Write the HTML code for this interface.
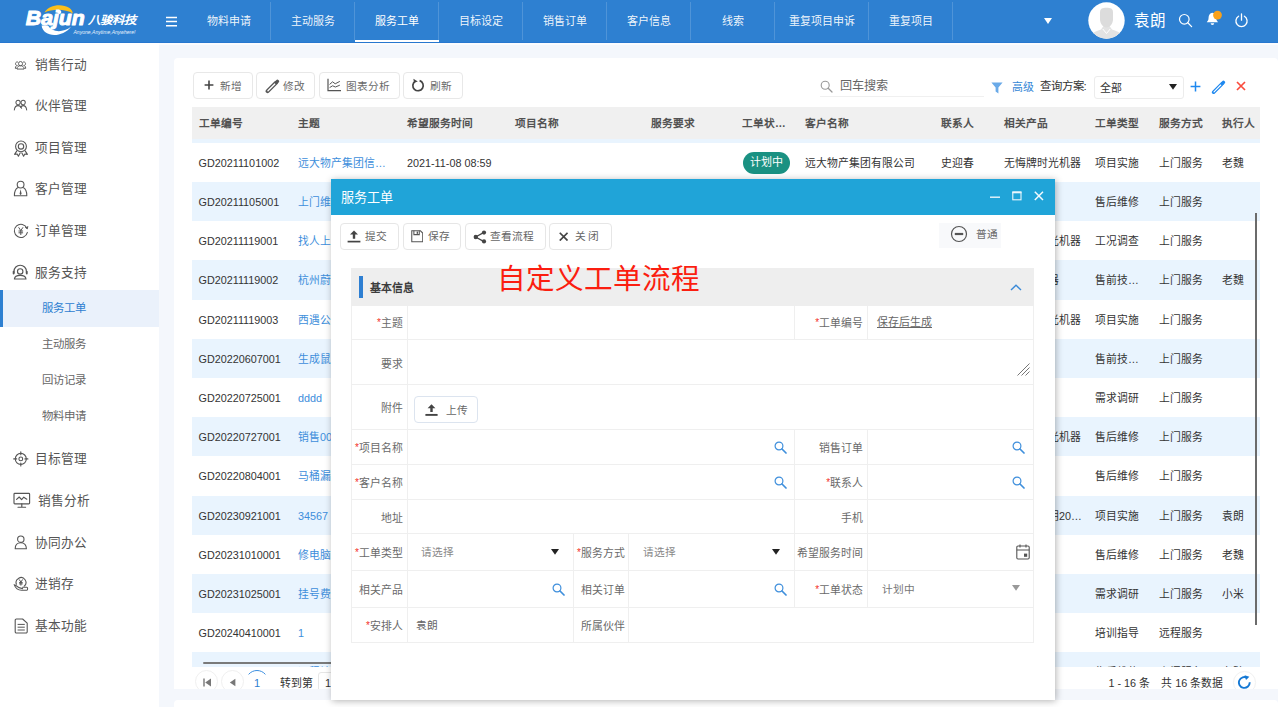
<!DOCTYPE html>
<html lang="zh-CN">
<head>
<meta charset="utf-8">
<title>服务工单</title>
<style>
*{box-sizing:border-box;margin:0;padding:0}
html,body{width:1278px;height:707px;overflow:hidden}
body{font-family:"Liberation Sans",sans-serif;font-size:10.7px;color:#333;background:#f4f7fc;position:relative}
.abs{position:absolute}
/* top bar */
#top{position:absolute;left:0;top:0;width:1278px;height:43px;background:#2e80d1;border-bottom:1px solid #2777cf}
#strip{position:absolute;left:0;top:43px;width:1278px;height:1.7px;background:#fbfcfe}
.nav{position:absolute;top:0;height:43px;line-height:42px;text-align:center;color:rgba(255,255,255,.93);font-size:11px}
.nav.act{color:#fff}
.nav.act:after{content:"";position:absolute;left:0;right:0;top:39.5px;height:2px;background:#fff}
.sep{position:absolute;top:2px;width:1px;height:38px;background:rgba(255,255,255,.16)}
/* sidebar */
#side{position:absolute;left:0;top:43px;width:159px;height:664px;background:#fff}
.mi{position:absolute;left:35px;font-size:12.7px;color:#555;line-height:16px;white-space:nowrap}
.si{position:absolute;left:42.2px;font-size:11.4px;margin-top:.6px;color:#666;line-height:16px;white-space:nowrap}
.ico{position:absolute}
#actbg{position:absolute;left:0;top:247px;width:159px;height:36.5px;background:#eaf1fb;border-left:3px solid #2e80d1}
/* card */
#card{position:absolute;left:174px;top:58px;width:1104px;height:630.5px;background:#fff;border-radius:4px 4px 0 0;overflow:hidden}
#card2{position:absolute;left:174px;top:700.2px;width:1104px;height:10px;background:#fff;border-radius:4px 4px 0 0}
.btn{position:absolute;top:72.3px;height:26.5px;border:1px solid #e8e8e8;border-radius:4px;background:#fff;color:#6a6a6a;font-size:10.7px;line-height:24px;white-space:nowrap}
.btn span{position:absolute;top:.3px;margin-left:.5px}
/* table */
#thead{position:absolute;left:192px;top:107px;width:1068px;height:31.5px;background:#f0f0f0}
#thead2{position:absolute;left:192px;top:138.5px;width:1068px;height:4.3px;background:#e9f4fe}
.th{position:absolute;top:0;line-height:33.8px;font-weight:bold;color:#525252;font-size:10.7px;white-space:nowrap}
#tbody{position:absolute;left:192px;top:142.8px;width:1068px;height:524px;overflow:hidden}
.tr{position:absolute;left:0;width:1068px;height:39.2px;line-height:40px;background:#fff}
.tr.alt{background:#e9f4fe}
.td{position:absolute;top:0;white-space:nowrap;color:#333;font-size:10.8px}
.td.lk{color:#3d8edb}
.badge{position:absolute;top:9.5px;height:21.5px;width:47px;border-radius:11px;background:#1a9182;color:#fff;line-height:21.5px;text-align:center;font-size:11px}
/* modal */
#modal{position:absolute;left:331px;top:179px;width:724px;height:521px;background:#fff;box-shadow:1px 1px 7px 0 rgba(0,0,0,.3)}
#mtitle{position:absolute;left:0;top:0;width:724px;height:36px;background:#20a4d8;color:#fff;font-size:13.1px;line-height:37.4px;padding-left:10.3px}
.mbtn{position:absolute;top:43.8px;height:27px;border:1px solid #e6e6e6;border-radius:4px;background:#fff;color:#666;font-size:10.7px;line-height:24px;white-space:nowrap}
.mbtn span{position:absolute;top:.5px}
#sec{position:absolute;left:20px;top:89.3px;width:683px;height:37.6px;background:#eeeeee}
#secbar{position:absolute;left:28px;top:97.3px;width:3.9px;height:22px;background:#2e7fd2}
#sect{position:absolute;left:39px;top:101.2px;font-weight:bold;font-size:10.9px;color:#3c3c3c;line-height:16px}
#red{position:absolute;left:166px;top:79.5px;font-size:28.6px;line-height:40px;color:#fb1e10;white-space:nowrap;letter-spacing:0}
.hl{position:absolute;left:20px;width:683px;height:1px;background:#efefef}
.vl{position:absolute;width:1px;background:#efefef}
.lab{position:absolute;text-align:right;color:#6a6a6a;font-size:10.85px;white-space:nowrap;line-height:16px}
.lab i{color:#f3301f;font-style:normal;font-size:10px;position:relative;top:-1px;margin-right:0}
.val{position:absolute;color:#777;font-size:10.7px;white-space:nowrap;line-height:16px}
</style>
</head>
<body>
<div id="top">
  <!-- logo -->
  <svg class="abs" style="left:20px;top:0" width="130" height="43" viewBox="0 0 130 43">
    <path d="M24.5 12.4 C29 5.300 41 3 49.5 8 C51.5 9.400 52.600 11.400 52.800 13.600 C46 9 33 8.600 24.500 12.400 Z" fill="#fbbf1a"/>
    <path d="M21.600 25.600 C23 37.500 42 38.500 51 26.800 C43 33 32 32.500 28 25.600 Z" fill="#fff"/>
    <circle cx="39.300" cy="12" r="2" fill="#fff"/>
    <text x="5.800" y="24.900" font-family="Liberation Sans, sans-serif" font-weight="bold" font-style="italic" font-size="20.500" fill="#fff" stroke="#fff" stroke-width="1" stroke-linejoin="round" textLength="59" lengthAdjust="spacingAndGlyphs">Bajun</text>
    <text x="67.800" y="24.400" font-family="Liberation Sans, sans-serif" font-weight="bold" font-style="italic" font-size="11.300" fill="#fff" textLength="48.500" lengthAdjust="spacingAndGlyphs">八骏科技</text>
    <text x="53.500" y="33.600" font-family="Liberation Sans, sans-serif" font-style="italic" font-size="5.200" fill="#e6f0fb" textLength="62" lengthAdjust="spacingAndGlyphs">Anyone,Anytime,Anywhere!</text>
  </svg>
  <!-- hamburger -->
  <svg class="abs" style="left:166px;top:16px" width="12" height="12" viewBox="0 0 12 12"><path d="M0 1.4h11M0 5.6h11M0 9.8h11" stroke="#fff" stroke-width="1.5" fill="none"/></svg>
  <div class="nav" style="left:186.5px;width:84px">物料申请</div>
  <div class="nav" style="left:270.5px;width:84px">主动服务</div>
  <div class="nav act" style="left:354.5px;width:84px">服务工单</div>
  <div class="nav" style="left:438.5px;width:84px">目标设定</div>
  <div class="nav" style="left:522.5px;width:84px">销售订单</div>
  <div class="nav" style="left:606.5px;width:84px">客户信息</div>
  <div class="nav" style="left:690.5px;width:84px">线索</div>
  <div class="nav" style="left:774.5px;width:94px">重复项目申诉</div>
  <div class="nav" style="left:868.5px;width:84px">重复项目</div>
  <div class="sep" style="left:270px"></div><div class="sep" style="left:354px"></div><div class="sep" style="left:438px"></div>
  <div class="sep" style="left:522px"></div><div class="sep" style="left:606px"></div><div class="sep" style="left:690px"></div>
  <div class="sep" style="left:774px"></div><div class="sep" style="left:868px"></div><div class="sep" style="left:952px"></div>
  <!-- caret -->
  <svg class="abs" style="left:1044px;top:18px" width="8" height="6" viewBox="0 0 8 6"><path d="M0 0h8L4 6z" fill="#fff"/></svg>
  <!-- avatar -->
  <svg class="abs" style="left:1088px;top:2px" width="37" height="37" viewBox="0 0 37 37">
    <defs><clipPath id="avc"><circle cx="18.500" cy="18.500" r="18.200"/></clipPath></defs>
    <circle cx="18.500" cy="18.500" r="18.200" fill="#fff"/>
    <g clip-path="url(#avc)">
      <path d="M2 38 C2 31 7 29.500 13 27.500 L15.500 24 L21.500 24 L24 27.500 C30 29.500 35 31 35 38 Z" fill="#e3e3e3"/>
      <path d="M12 10.500 C12 6.500 14.500 5.800 18.500 5.800 C22.500 5.800 25 6.500 25 10.500 L25 17 C25 21.500 22 25.500 18.500 25.500 C15 25.500 12 21.500 12 17 Z" fill="#dcdcdc"/>
      <path d="M14.800 27 L18.500 31.500 L22.200 27" stroke="#fff" stroke-width="1" fill="none"/>
    </g>
  </svg>
  <div class="abs" style="left:1134px;top:11px;font-size:15.6px;line-height:20px;color:#fff;white-space:nowrap">袁朗</div>
  <!-- search -->
  <svg class="abs" style="left:1178px;top:13px" width="15" height="15" viewBox="0 0 15 15"><circle cx="6.3" cy="6.3" r="4.8" stroke="#fff" stroke-width="1.2" fill="none"/><path d="M9.8 9.8L13.6 13.6" stroke="#fff" stroke-width="1.3" stroke-linecap="round"/></svg>
  <!-- bell -->
  <svg class="abs" style="left:1205px;top:10px" width="20" height="18" viewBox="0 0 20 18">
    <path d="M7.400 2.800 C4.800 3.200 3.600 5.400 3.600 7.600 C3.600 10.200 2.600 11.200 1.800 12.200 L13 12.200 C12.200 11.200 11.200 10.200 11.200 7.600 C11.200 5.400 10 3.200 7.400 2.800 Z" fill="#fff"/>
    <path d="M5.600 13.200 a1.800 1.800 0 0 0 3.600 0z" fill="#fff"/>
    <circle cx="12.500" cy="5.100" r="4.400" fill="#f9a11b"/>
  </svg>
  <!-- power -->
  <svg class="abs" style="left:1234px;top:13px" width="15" height="15" viewBox="0 0 15 15"><path d="M4.6 3.2 A5.6 5.6 0 1 0 10.4 3.2" stroke="#fff" stroke-width="1.3" fill="none" stroke-linecap="round"/><path d="M7.5 1v6.2" stroke="#fff" stroke-width="1.3" stroke-linecap="round"/></svg>
</div>
<div id="strip"></div>
<div id="side"></div>
<div id="actbg" style="top:290px"></div>
<!-- sidebar icons -->
<svg class="ico" style="left:14.200px;top:59px" width="13.400" height="12.600" preserveAspectRatio="none" viewBox="0 0 16 14" fill="none" stroke="#555" stroke-width="1.05">
  <circle cx="7.8" cy="5.2" r="2.4"/><path d="M3.6 11.2c0-2.6 1.8-3.8 4.2-3.8s4.2 1.2 4.2 3.8z"/>
  <path d="M4.9 3.6a2 2 0 1 0-.6 3.6M2.9 7.6C1.9 8.2 1.6 9.2 1.6 10.4h1.8M10.7 3.6a2 2 0 1 1 .6 3.6M12.7 7.6c1 .6 1.3 1.6 1.3 2.8h-1.8"/>
</svg>
<svg class="ico" style="left:13.300px;top:98px" width="15" height="14" preserveAspectRatio="none" viewBox="0 0 16 14" fill="none" stroke="#555" stroke-width="1.05" stroke-linecap="round">
  <circle cx="5.4" cy="4.6" r="2.3"/><circle cx="10.8" cy="4.6" r="2.3"/>
  <path d="M1.4 12c.3-2.6 1.8-4.4 4-4.4s3.2 1.2 3.8 2.6M8 9.4c.6-1 1.6-1.8 2.8-1.8 2.2 0 3.5 1.8 3.8 4.4"/>
</svg>
<svg class="ico" style="left:12.5px;top:139.5px" width="16" height="17" viewBox="0 0 16 17" fill="none" stroke="#555" stroke-width="1.1" stroke-linejoin="round">
  <circle cx="8" cy="6.4" r="5.4"/><circle cx="8" cy="6.4" r="2.7"/>
  <path d="M4 10.6L1.6 14.4l2.6-.4 1.2 2.2 2-3.8M12 10.6l2.4 3.8-2.6-.4-1.2 2.2-2-3.8"/>
</svg>
<svg class="ico" style="left:13px;top:180px" width="16" height="17" viewBox="0 0 16 17" fill="none" stroke="#555" stroke-width="1.1" stroke-linejoin="round">
  <circle cx="7.6" cy="4.6" r="3.4"/>
  <path d="M5 7.6C2.6 8.8 1.4 11.6 1.4 15.8h12.4c0-4.2-1.2-7-3.6-8.2"/>
  <path d="M7.6 9.2l-1 4.6 1 1.4 1-1.4z" fill="#555" stroke="none"/>
</svg>
<svg class="ico" style="left:12.5px;top:222.5px" width="16" height="16" viewBox="0 0 16 16" fill="none" stroke="#555" stroke-width="1.05" stroke-linecap="round">
  <path d="M14 5.2A6.6 6.6 0 1 0 14.4 9.4"/><path d="M12.6 4.4l1.6 1.2.6-2" stroke-linejoin="round"/>
  <path d="M5.8 4.6L7.8 7.6 9.8 4.6M7.8 7.6v4M5.9 8h3.8M5.9 9.8h3.8" stroke-width="1"/>
</svg>
<svg class="ico" style="left:11.7px;top:264px" width="17" height="16" viewBox="0 0 17 16" fill="none" stroke="#555" stroke-width="1.15" stroke-linecap="round">
  <path d="M2 9V7.4a6.2 6.2 0 0 1 12.4 0V9"/><circle cx="8.2" cy="7.4" r="2.7"/>
  <path d="M2.4 15c.3-2.6 2.4-3.6 5.8-3.6s5.5 1 5.8 3.6z" stroke-linejoin="round"/>
  <path d="M1.6 7.6v2M14.8 7.6v2" stroke-width="1.8"/>
</svg>
<svg class="ico" style="left:13px;top:450.5px" width="16" height="16" viewBox="0 0 16 16" fill="none" stroke="#555" stroke-width="1.1" stroke-linecap="round">
  <circle cx="7.8" cy="7.9" r="5.5"/><circle cx="7.8" cy="7.9" r="1.9"/><path d="M7.8 .8v3M7.8 12v3M.7 7.9h3M11.9 7.9h3"/>
</svg>
<svg class="ico" style="left:12.5px;top:491.5px" width="18" height="17" viewBox="0 0 18 17" fill="none" stroke="#555" stroke-width="1.15" stroke-linecap="round" stroke-linejoin="round">
  <rect x="1" y="1.4" width="15.6" height="10.4" rx=".8"/><path d="M8.8 11.8v3M5 15.2h7.6M3.6 7.4l2.6-2.4 2.4 2.6 2.2-2.4 3 2"/>
</svg>
<svg class="ico" style="left:13.5px;top:535px" width="14" height="15" viewBox="0 0 14 15" fill="none" stroke="#555" stroke-width="1.1" stroke-linejoin="round">
  <circle cx="6.8" cy="4.2" r="3.2"/><path d="M1.2 13.8c0-4 2-6 5.6-6s5.6 2 5.6 6z"/>
</svg>
<svg class="ico" style="left:13px;top:575.700px" width="16" height="16" viewBox="0 0 16 16" fill="none" stroke="#555" stroke-width="1.1" stroke-linecap="round" stroke-linejoin="round">
  <path d="M3.4 8.2A4.900 4.900 0 1 1 11.200 10.200"/><path d="M6.400 3.800l1.500 2.400 1.500-2.400M7.900 6.200v3M6.500 6.600h2.800M6.500 7.900h2.800" stroke-width="1"/>
  <path d="M1.200 8.600C2.200 11.400 5 14.200 8.600 14.200h5.200c1.100 0 1.100-2.900 0-2.900H9.600M2.400 9.200C4 10.600 6.400 12.600 9.600 12.600"/>
</svg>
<svg class="ico" style="left:13.5px;top:617.5px" width="15" height="16" viewBox="0 0 15 16" fill="none" stroke="#555" stroke-width="1.1" stroke-linecap="round" stroke-linejoin="round">
  <path d="M1.200 2.200a1.200 1.200 0 0 1 1.200-1.200h6.200l4.600 4.200v8.600a1.200 1.200 0 0 1-1.200 1.200H2.400a1.200 1.200 0 0 1-1.200-1.200z"/>
  <path d="M4 6.400h6.400M4 9.200h6.400M4 12h6.400" stroke-width="1"/>
</svg>
<div class="mi" style="top:57px">销售行动</div>
<div class="mi" style="top:98px">伙伴管理</div>
<div class="mi" style="top:139.500px">项目管理</div>
<div class="mi" style="top:181px">客户管理</div>
<div class="mi" style="top:223px">订单管理</div>
<div class="mi" style="top:264.500px">服务支持</div>
<div class="si" style="top:299px;color:#2e80d1">服务工单</div>
<div class="si" style="top:335px">主动服务</div>
<div class="si" style="top:371.500px">回访记录</div>
<div class="si" style="top:407.500px">物料申请</div>
<div class="mi" style="top:451px">目标管理</div>
<div class="mi" style="top:492.500px;left:37.500px">销售分析</div>
<div class="mi" style="top:534.500px">协同办公</div>
<div class="mi" style="top:576px">进销存</div>
<div class="mi" style="top:617.500px">基本功能</div>
<div id="card"></div>
<div id="card2"></div>
<!-- toolbar buttons -->
<div class="btn" style="left:193px;width:59.500px">
  <svg class="abs" style="left:9.500px;top:7px" width="10" height="10" viewBox="0 0 10 10"><path d="M5 .6v8.800M.6 5h8.800" stroke="#444" stroke-width="1.600"/></svg>
  <span style="left:25px">新增</span></div>
<div class="btn" style="left:256px;width:59px">
  <svg class="abs" style="left:7.500px;top:5.500px" width="15" height="15" viewBox="0 0 15 15"><path d="M2.600 12.200L10.600 4.200" stroke="#555" stroke-width="4" stroke-linecap="round"/><path d="M3 11.800L9.800 5" stroke="#fff" stroke-width="1.400" stroke-linecap="round"/><path d="M11.600 3.200L12.400 2.400" stroke="#555" stroke-width="3.400" stroke-linecap="round"/></svg>
  <span style="left:25px">修改</span></div>
<div class="btn" style="left:318.500px;width:81px">
  <svg class="abs" style="left:7.500px;top:5px" width="15" height="14" viewBox="0 0 15 14" fill="none" stroke="#555" stroke-width="1.200"><path d="M1 .8v11.800h13"/><path d="M2.600 6.400l3-2.600 2.600 2 4.600-2.400M2.600 9.600l3-1.800 2.800 1.200 4.400-1.800" stroke-width="1"/></svg>
  <span style="left:25.500px">图表分析</span></div>
<div class="btn" style="left:403px;width:59.500px">
  <svg class="abs" style="left:7px;top:5px" width="14" height="14" viewBox="0 0 14 14" fill="none"><path d="M4.200 3.200A5.200 5.200 0 1 0 8.600 2.600" stroke="#444" stroke-width="1.700"/><path d="M2.400 .8l.6 4 3.800-1.400z" fill="#444"/></svg>
  <span style="left:25px">刷新</span></div>
<!-- search -->
<svg class="abs" style="left:820px;top:80px" width="13" height="13" viewBox="0 0 13 13"><circle cx="5.200" cy="5.200" r="4" stroke="#999" stroke-width="1.100" fill="none"/><path d="M8.200 8.200L12 12" stroke="#999" stroke-width="1.300" stroke-linecap="round"/></svg>
<div class="abs" style="left:839.800px;top:78px;font-size:12.100px;line-height:16px;color:#666;white-space:nowrap">回车搜索</div>
<div class="abs" style="left:820px;top:96px;width:164px;height:1px;background:#f0f0f0"></div>
<!-- filter -->
<svg class="abs" style="left:990.500px;top:81.500px" width="12" height="12" viewBox="0 0 12 12"><path d="M.4 .6h11.200L7.400 5.600v5.800L4.600 9.600v-4z" fill="#6aaae8"/></svg>
<div class="abs" style="left:1012px;top:78.500px;font-size:10.900px;line-height:16px;color:#3486d6;white-space:nowrap">高级</div>
<div class="abs" style="left:1039.500px;top:78px;font-size:11.400px;line-height:16px;color:#333;white-space:nowrap">查询方案:</div>
<div class="abs" style="left:1093.500px;top:76px;width:90px;height:23px;border:1px solid #ececec;border-radius:3px;background:#fff"></div>
<div class="abs" style="left:1100px;top:79.500px;font-size:10.900px;line-height:16px;color:#333">全部</div>
<svg class="abs" style="left:1169px;top:83.500px" width="8" height="6" viewBox="0 0 8 6"><path d="M0 0h8L4 5.800z" fill="#222"/></svg>
<svg class="abs" style="left:1189.500px;top:80.500px" width="11" height="11" viewBox="0 0 11 11"><path d="M5.500 .6v9.800M.6 5.500h9.800" stroke="#1e88ef" stroke-width="1.500"/></svg>
<svg class="abs" style="left:1211px;top:79.500px" width="15" height="15" viewBox="0 0 15 15"><path d="M2.600 12.200L10.600 4.200" stroke="#1e88ef" stroke-width="3.600" stroke-linecap="round"/><path d="M3 11.800L9.800 5" stroke="#fff" stroke-width="1.100" stroke-linecap="round"/><path d="M11.600 3.200L12.400 2.400" stroke="#1e88ef" stroke-width="3.400" stroke-linecap="round"/></svg>
<svg class="abs" style="left:1236px;top:81px" width="10" height="10" viewBox="0 0 10 10"><path d="M1 1l8 8M9 1l-8 8" stroke="#fa4b3c" stroke-width="1.700"/></svg>
<!-- table -->
<div id="thead">
  <span class="th" style="left:6.500px">工单编号</span><span class="th" style="left:106px">主题</span><span class="th" style="left:215px">希望服务时间</span>
  <span class="th" style="left:323px">项目名称</span><span class="th" style="left:459px">服务要求</span><span class="th" style="left:550px">工单状…</span>
  <span class="th" style="left:613px">客户名称</span><span class="th" style="left:749px">联系人</span><span class="th" style="left:812px">相关产品</span>
  <span class="th" style="left:903px">工单类型</span><span class="th" style="left:967px">服务方式</span><span class="th" style="left:1030px">执行人</span>
</div>
<div id="thead2"></div>
<div id="tbody">
<div class="tr" style="top:0.00px"><span class="td" style="left:6.5px">GD20211101002</span><span class="td lk" style="left:106px">远大物产集团信…</span><span class="td" style="left:215px">2021-11-08 08:59</span><span class="badge" style="left:551.4px">计划中</span><span class="td" style="left:613px">远大物产集团有限公司</span><span class="td" style="left:749px">史迎春</span><span class="td" style="left:812px">无悔牌时光机器</span><span class="td" style="left:903px">项目实施</span><span class="td" style="left:967px">上门服务</span><span class="td" style="left:1030px">老魏</span></div>
<div class="tr alt" style="top:39.20px"><span class="td" style="left:6.5px">GD20211105001</span><span class="td lk" style="left:106px">上门维修空调…</span><span class="td" style="left:903px">售后维修</span><span class="td" style="left:967px">上门服务</span></div>
<div class="tr" style="top:78.40px"><span class="td" style="left:6.5px">GD20211119001</span><span class="td lk" style="left:106px">找人上门看看…</span><span class="td" style="left:812px">无悔牌时光机器</span><span class="td" style="left:903px">工况调查</span><span class="td" style="left:967px">上门服务</span></div>
<div class="tr alt" style="top:117.60px"><span class="td" style="left:6.5px">GD20211119002</span><span class="td lk" style="left:106px">杭州蔚来汽车…</span><span class="td" style="left:812px">空气净化器</span><span class="td" style="left:903px">售前技…</span><span class="td" style="left:967px">上门服务</span><span class="td" style="left:1030px">老魏</span></div>
<div class="tr" style="top:156.80px"><span class="td" style="left:6.5px">GD20211119003</span><span class="td lk" style="left:106px">西遇公司服务…</span><span class="td" style="left:812px">无悔牌时光机器</span><span class="td" style="left:903px">项目实施</span><span class="td" style="left:967px">上门服务</span></div>
<div class="tr alt" style="top:196.00px"><span class="td" style="left:6.5px">GD20220607001</span><span class="td lk" style="left:106px">生成鼠标工单…</span><span class="td" style="left:903px">售前技…</span><span class="td" style="left:967px">上门服务</span></div>
<div class="tr" style="top:235.20px"><span class="td" style="left:6.5px">GD20220725001</span><span class="td lk" style="left:106px">dddd</span><span class="td" style="left:903px">需求调研</span><span class="td" style="left:967px">上门服务</span></div>
<div class="tr alt" style="top:274.40px"><span class="td" style="left:6.5px">GD20220727001</span><span class="td lk" style="left:106px">销售0001</span><span class="td" style="left:812px">无悔牌时光机器</span><span class="td" style="left:903px">售后维修</span><span class="td" style="left:967px">上门服务</span></div>
<div class="tr" style="top:313.60px"><span class="td" style="left:6.5px">GD20220804001</span><span class="td lk" style="left:106px">马桶漏水</span><span class="td" style="left:903px">售后维修</span><span class="td" style="left:967px">上门服务</span></div>
<div class="tr alt" style="top:352.80px"><span class="td" style="left:6.5px">GD20230921001</span><span class="td lk" style="left:106px">34567</span><span class="td" style="left:812px">无悔牌说明20…</span><span class="td" style="left:903px">项目实施</span><span class="td" style="left:967px">上门服务</span><span class="td" style="left:1030px">袁朗</span></div>
<div class="tr" style="top:392.00px"><span class="td" style="left:6.5px">GD20231010001</span><span class="td lk" style="left:106px">修电脑</span><span class="td" style="left:903px">售后维修</span><span class="td" style="left:967px">上门服务</span><span class="td" style="left:1030px">老魏</span></div>
<div class="tr alt" style="top:431.20px"><span class="td" style="left:6.5px">GD20231025001</span><span class="td lk" style="left:106px">挂号费</span><span class="td" style="left:903px">需求调研</span><span class="td" style="left:967px">上门服务</span><span class="td" style="left:1030px">小米</span></div>
<div class="tr" style="top:470.40px"><span class="td" style="left:6.5px">GD20240410001</span><span class="td lk" style="left:106px">1</span><span class="td" style="left:903px">培训指导</span><span class="td" style="left:967px">远程服务</span></div>
<div class="tr alt" style="top:509.60px"><span class="td" style="left:6.5px">GD20240410002</span><span class="td lk" style="left:106px">远程培训指导…</span><span class="td" style="left:903px">售后维修</span><span class="td" style="left:967px">上门服务</span><span class="td" style="left:1030px">老魏</span></div>
</div>
<!-- scrollbars -->
<div class="abs" style="left:1255.300px;top:212.500px;width:1.800px;height:412.500px;background:#6b6b6b"></div>
<div class="abs" style="left:203px;top:662.100px;width:840px;height:2.400px;background:#7a7a7a;border-radius:1px"></div>
<!-- pagination -->
<div class="abs" style="left:174px;top:667px;width:1086px;height:21.500px;overflow:hidden">
  <div class="abs" style="left:21.300px;top:3px;width:23px;height:23px;border:1px solid #f0f0f0;border-radius:50%"></div>
  <svg class="abs" style="left:28.500px;top:10.500px" width="9" height="9" viewBox="0 0 9 9"><path d="M1 .6v7.800" stroke="#777" stroke-width="1.400"/><path d="M8 .6v7.800L2.200 4.500z" fill="#777"/></svg>
  <div class="abs" style="left:47px;top:3px;width:23px;height:23px;border:1px solid #f0f0f0;border-radius:50%"></div>
  <svg class="abs" style="left:55px;top:10.500px" width="7" height="9" viewBox="0 0 7 9"><path d="M6.400 .8v7.400L.8 4.500z" fill="#777"/></svg>
  <svg class="abs" style="left:71px;top:2px" width="24" height="10" viewBox="0 0 24 10"><path d="M3.600 5.400A11 11 0 0 1 20.400 5.400" stroke="#3a8ee0" stroke-width="1" fill="none"/></svg>
  <div class="abs" style="left:80px;top:8.500px;font-size:11px;line-height:14px;color:#2e80d1">1</div>
  <div class="abs" style="left:106px;top:7.500px;font-size:10.900px;line-height:16px;color:#333;white-space:nowrap">转到第</div>
  <div class="abs" style="left:144px;top:4.500px;width:40px;height:24px;border:1px solid #e6e6e6;border-radius:3px"></div>
  <div class="abs" style="left:151px;top:8.500px;font-size:11px;line-height:14px;color:#333">1</div>
  <div class="abs" style="left:934.400px;top:7.600px;font-size:10.800px;line-height:16px;color:#333;white-space:nowrap">1 - 16 条<span style="margin-left:11.200px">共 16 条数据</span></div>
  <div class="abs" style="left:1059px;top:4px;width:22.600px;height:22.600px;border:1px solid #f1f1f1;border-radius:50%"></div>
  <svg class="abs" style="left:1063px;top:7.800px" width="15" height="15" viewBox="0 0 15 15" fill="none"><path d="M10.300 3A5.400 5.400 0 1 0 12.700 7.200" stroke="#1478d4" stroke-width="1.900"/><path d="M7.600 .2l4.800 1.600-3.400 3.200z" fill="#1478d4"/></svg>
</div>
<div id="modal">
  <div id="mtitle">服务工单</div>
  <svg class="abs" style="left:659px;top:16.800px" width="10" height="3" viewBox="0 0 10 3"><path d="M0 1.200h10" stroke="#eaf6fc" stroke-width="1.400"/></svg>
  <svg class="abs" style="left:681px;top:12px" width="10" height="10" viewBox="0 0 10 10"><rect x=".8" y="1.400" width="8.200" height="7.400" fill="none" stroke="#eaf6fc" stroke-width="1.100"/><path d="M.3 1.300h9.200" stroke="#eaf6fc" stroke-width="2"/></svg>
  <svg class="abs" style="left:703px;top:12px" width="10" height="10" viewBox="0 0 10 10"><path d="M.8 .8l8.200 8.200M9 .8L.8 9" stroke="#f2fafd" stroke-width="1.500"/></svg>
  <!-- toolbar -->
  <div class="mbtn" style="left:8.500px;width:59px">
    <svg class="abs" style="left:6.800px;top:6.300px" width="14" height="13" viewBox="0 0 14 13"><path d="M.6 11.600h12.800" stroke="#444" stroke-width="1.700"/><path d="M7 .4l4 4.200H8.200v4.200H5.800V4.600H3z" fill="#444"/></svg>
    <span style="left:24.700px">提交</span></div>
  <div class="mbtn" style="left:71.500px;width:58.500px">
    <svg class="abs" style="left:7px;top:6.300px" width="12.500" height="12.500" viewBox="0 0 13 13" fill="none" stroke="#555" stroke-width="1.100"><path d="M.8 .8h9l2.400 2.400v9H.8z"/><path d="M3 .8v4h5.600v-4" /><path d="M6.600 1.600v2.400" stroke-width="1.400"/></svg>
    <span style="left:24.500px">保存</span></div>
  <div class="mbtn" style="left:134px;width:80.500px">
    <svg class="abs" style="left:7px;top:5.800px" width="14" height="14" viewBox="0 0 14 14"><path d="M2.600 7L11 2.400M2.600 7L11 11.600" stroke="#444" stroke-width="1.300"/><circle cx="2.800" cy="7" r="2.200" fill="#444"/><circle cx="11" cy="2.600" r="2.100" fill="#444"/><circle cx="11" cy="11.400" r="2.100" fill="#444"/></svg>
    <span style="left:24px">查看流程</span></div>
  <div class="mbtn" style="left:218px;width:62.500px">
    <svg class="abs" style="left:8.800px;top:8px" width="9.500" height="9.500" viewBox="0 0 10 10"><path d="M.8 .8l8.200 8.200M9 .8L.8 9" stroke="#444" stroke-width="1.800"/></svg>
    <span style="left:24.500px">关 闭</span></div>
  <div class="abs" style="left:607.800px;top:43.600px;width:62.200px;height:25.800px;background:#f8f9fb"></div>
  <svg class="abs" style="left:619px;top:46.300px" width="18" height="18" viewBox="0 0 18 18"><circle cx="9" cy="9" r="7.500" fill="none" stroke="#555" stroke-width="1.200"/><path d="M4.800 9h8.400" stroke="#555" stroke-width="2.200"/></svg>
  <div class="abs" style="left:645px;top:47px;font-size:10.700px;line-height:16px;color:#6a6a6a;white-space:nowrap">普通</div>
  <!-- section -->
  <div id="sec"></div><div id="secbar"></div><div id="sect">基本信息</div>
  <svg class="abs" style="left:678.500px;top:105px" width="12" height="7" viewBox="0 0 12 7"><path d="M1 6l5-4.800L11 6" fill="none" stroke="#3a8ad8" stroke-width="1.400"/></svg>
  <div id="red">自定义工单流程</div>
<div class="hl" style="top:159.7px"></div>
<div class="hl" style="top:204.7px"></div>
<div class="hl" style="top:250.0px"></div>
<div class="hl" style="top:285.0px"></div>
<div class="hl" style="top:319.9px"></div>
<div class="hl" style="top:354.0px"></div>
<div class="hl" style="top:391.0px"></div>
<div class="hl" style="top:427.9px"></div>
<div class="hl" style="top:462.7px"></div>
<div class="vl" style="left:19.7px;top:126.5px;height:336.9px"></div>
<div class="vl" style="left:702.2px;top:126.5px;height:336.9px"></div>
<div class="vl" style="left:76.4px;top:126.5px;height:336.9px"></div>
<div class="vl" style="left:462.7px;top:126.5px;height:33.9px"></div>
<div class="vl" style="left:535.9px;top:126.5px;height:33.9px"></div>
<div class="vl" style="left:462.7px;top:250.7px;height:104.0px"></div>
<div class="vl" style="left:535.9px;top:250.7px;height:104.0px"></div>
<div class="vl" style="left:462.7px;top:354.7px;height:73.9px"></div>
<div class="vl" style="left:535.9px;top:354.7px;height:73.9px"></div>
<div class="vl" style="left:242.3px;top:354.7px;height:108.7px"></div>
<div class="vl" style="left:296.9px;top:354.7px;height:108.7px"></div>
<div class="lab" style="right:652.2px;top:136.2px"><i>*</i>主题</div>
<div class="lab" style="right:191.9px;top:136.2px"><i>*</i>工单编号</div>
<div class="val" style="left:546.0px;top:135.4px;color:#666;text-decoration:underline;font-size:10.9px">保存后生成</div>
<div class="lab" style="right:652.2px;top:176.8px">要求</div>
<div class="lab" style="right:652.2px;top:220.8px">附件</div>
<div class="lab" style="right:652.2px;top:261.0px"><i>*</i>项目名称</div>
<div class="lab" style="right:191.9px;top:261.0px">销售订单</div>
<div class="lab" style="right:652.2px;top:295.9px"><i>*</i>客户名称</div>
<div class="lab" style="right:191.9px;top:295.9px"><i>*</i>联系人</div>
<div class="lab" style="right:652.2px;top:330.5px">地址</div>
<div class="lab" style="right:191.9px;top:330.5px">手机</div>
<div class="lab" style="right:652.2px;top:366.0px"><i>*</i>工单类型</div>
<div class="lab" style="right:430.1px;top:366.0px"><i>*</i>服务方式</div>
<div class="lab" style="right:191.9px;top:366.0px">希望服务时间</div>
<div class="lab" style="right:652.2px;top:403.0px">相关产品</div>
<div class="lab" style="right:430.1px;top:403.0px">相关订单</div>
<div class="lab" style="right:191.9px;top:403.0px"><i>*</i>工单状态</div>
<div class="lab" style="right:652.2px;top:438.5px"><i>*</i>安排人</div>
<div class="lab" style="right:430.1px;top:438.5px">所属伙伴</div>
<div class="val" style="left:90.0px;top:365.2px;color:#888">请选择</div>
<div class="val" style="left:311.7px;top:365.2px;color:#888">请选择</div>
<div class="val" style="left:550.6px;top:402.2px;color:#777">计划中</div>
<div class="val" style="left:85.2px;top:437.7px;color:#666">袁朗</div>
<svg class="abs" style="left:442.5px;top:261.7px" width="13" height="13" viewBox="0 0 13 13"><circle cx="5" cy="5" r="3.900" stroke="#3f8fdc" stroke-width="1.200" fill="none"/><path d="M8 8L12 12" stroke="#3f8fdc" stroke-width="1.700" stroke-linecap="round"/></svg>
<svg class="abs" style="left:442.5px;top:296.6px" width="13" height="13" viewBox="0 0 13 13"><circle cx="5" cy="5" r="3.900" stroke="#3f8fdc" stroke-width="1.200" fill="none"/><path d="M8 8L12 12" stroke="#3f8fdc" stroke-width="1.700" stroke-linecap="round"/></svg>
<svg class="abs" style="left:681.3px;top:261.7px" width="13" height="13" viewBox="0 0 13 13"><circle cx="5" cy="5" r="3.900" stroke="#3f8fdc" stroke-width="1.200" fill="none"/><path d="M8 8L12 12" stroke="#3f8fdc" stroke-width="1.700" stroke-linecap="round"/></svg>
<svg class="abs" style="left:681.3px;top:296.6px" width="13" height="13" viewBox="0 0 13 13"><circle cx="5" cy="5" r="3.900" stroke="#3f8fdc" stroke-width="1.200" fill="none"/><path d="M8 8L12 12" stroke="#3f8fdc" stroke-width="1.700" stroke-linecap="round"/></svg>
<svg class="abs" style="left:220.8px;top:403.7px" width="13" height="13" viewBox="0 0 13 13"><circle cx="5" cy="5" r="3.900" stroke="#3f8fdc" stroke-width="1.200" fill="none"/><path d="M8 8L12 12" stroke="#3f8fdc" stroke-width="1.700" stroke-linecap="round"/></svg>
<svg class="abs" style="left:442.5px;top:403.7px" width="13" height="13" viewBox="0 0 13 13"><circle cx="5" cy="5" r="3.900" stroke="#3f8fdc" stroke-width="1.200" fill="none"/><path d="M8 8L12 12" stroke="#3f8fdc" stroke-width="1.700" stroke-linecap="round"/></svg>
<svg class="abs" style="left:219.6px;top:369.9px" width="8" height="6" viewBox="0 0 8 6"><path d="M0 0h8L4 5.800z" fill="#222"/></svg>
<svg class="abs" style="left:441.4px;top:369.9px" width="8" height="6" viewBox="0 0 8 6"><path d="M0 0h8L4 5.800z" fill="#222"/></svg>
<svg class="abs" style="left:680.6px;top:405.9px" width="8" height="6" viewBox="0 0 8 6"><path d="M0 0h8L4 5.800z" fill="#999"/></svg>
<svg class="abs" style="left:685.0px;top:365.0px" width="14" height="16" viewBox="0 0 14 16" fill="none" stroke="#555" stroke-width="1.100"><rect x=".8" y="2" width="12.400" height="13" rx="1.200"/><path d="M.8 6h12.400M4 .4v3M10 .4v3"/><rect x="8" y="9.600" width="3.200" height="3.200" fill="#555" stroke="none"/></svg>
<svg class="abs" style="left:685.5px;top:183.8px" width="13" height="13" viewBox="0 0 13 13" stroke="#666" stroke-width=".9"><path d="M12.500 .5L.5 12.500M12.500 4.500L4.500 12.500M12.500 8.500L8.500 12.500"/></svg>
<div class="mbtn" style="left:83.3px;top:216.9px;width:63.400px;height:26.800px;border-color:#dce4ef"><svg class="abs" style="left:9.800px;top:6.800px" width="13" height="12" viewBox="0 0 13 12"><path d="M.4 10.900h12.200" stroke="#444" stroke-width="1.900"/><path d="M6.500 .2l3.900 4H7.700v3.900H5.300V4.200H2.600z" fill="#444"/></svg><span style="left:30.800px;top:1px">上传</span></div>
</div>
</body>
</html>
